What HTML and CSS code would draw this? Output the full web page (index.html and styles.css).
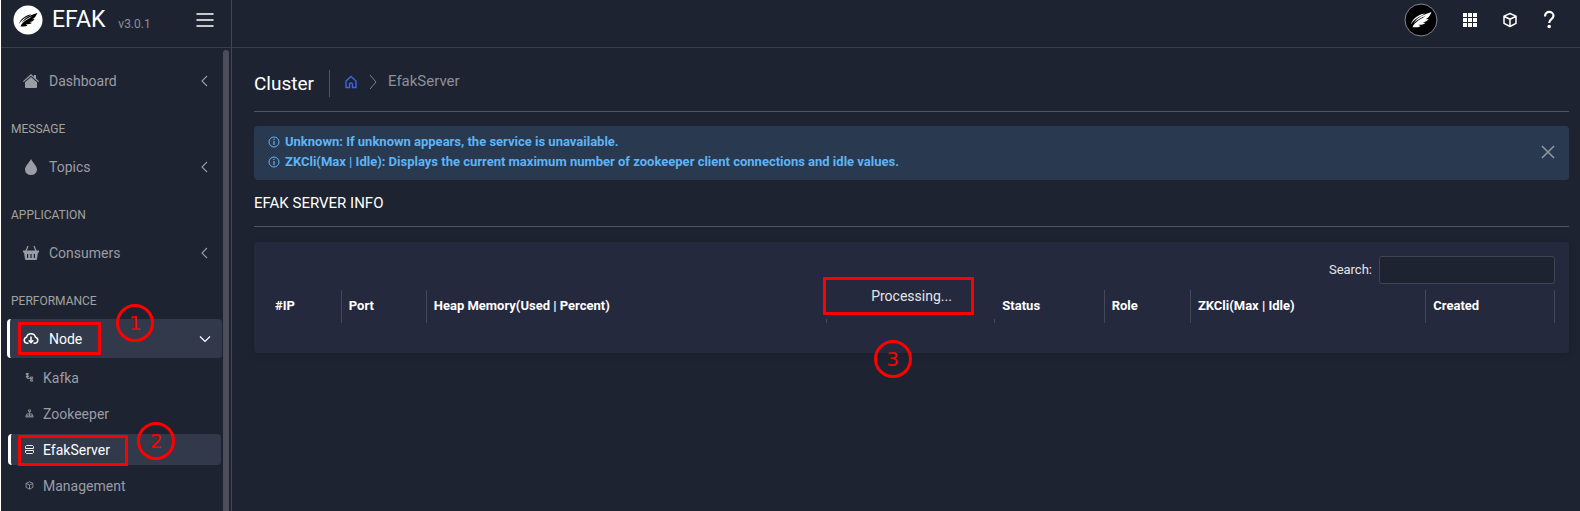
FILE: index.html
```html
<!DOCTYPE html>
<html lang="en">
<head>
<meta charset="utf-8">
<title>EFAK - EfakServer</title>
<link rel="stylesheet" href="styles.css">
</head>
<body>
<svg class="defs" aria-hidden="true">
  <symbol id="feather" viewBox="0 0 22 18">
    <path d="M21.500 1C20 5 18 7 15.500 8.200L18.500 8C17 10.300 15 11 12.500 11.500L15.500 12C13 14 10.500 13.800 8.500 13.800L10.500 15.200C8 16.500 5 16.500 2.500 16.200C5 10 12 8 16 4.500C11 7 6 9 3.500 13C6 6.500 14 3.500 21.500 1Z" fill="currentColor"/>
    <path d="M15 2.500C8 3.500 2.500 8 .8 13.500C3.500 9 7 6.500 11.500 4.700Z" fill="currentColor"/>
  </symbol>
  <symbol id="chev-left" viewBox="0 0 12 12"><path d="M8 1L3 6l5 5" fill="none" stroke="currentColor" stroke-width="1.100"/></symbol>
  <symbol id="cube" viewBox="0 0 16 16"><path d="M8 1.500l6 2.600v7.200L8 14.500l-6-3.200V4.100zM2 4.300l6 2.900 6-2.900M8 7.200v7.100" fill="none" stroke="currentColor" stroke-width="1.500" stroke-linejoin="round"/></symbol>
  <symbol id="info" viewBox="0 0 12 12"><circle cx="6" cy="6" r="5" fill="none" stroke="currentColor"/><path d="M6 5v4M6 2.800v1.200" stroke="currentColor" stroke-width="1.200"/></symbol>
</svg>
<div class="app">
  <aside class="sidebar">
    <div class="brand">
      <svg class="logo" viewBox="0 0 30 30"><circle cx="15" cy="15" r="14.500" fill="#fff"/><use href="#feather" x="5" y="7" width="20" height="16" color="#000"/></svg>
      <span class="brand-name">EFAK</span>
      <span class="version">v3.0.1</span>
      <button class="icon-btn toggle" aria-label="Toggle menu"><svg width="18" height="16" viewBox="0 0 18 16"><path d="M1 2h16M1 8h16M1 14h16" stroke="#fff" stroke-width="1.500" stroke-linecap="round"/></svg></button>
    </div>
    <div class="side-body">
      <nav class="menu">
        <a class="item" href="#"><svg class="ico" viewBox="0 0 16 16"><path d="M0 8.200L8 1l3 2.700V2h2v3.500l3 2.700-.8.800L8 2.800.8 9zM2 9.200L8 4l6 5.200V14a1 1 0 0 1-1 1H3a1 1 0 0 1-1-1z" fill="currentColor"/></svg><span>Dashboard</span><svg class="chev"><use href="#chev-left"/></svg></a>
        <div class="label">MESSAGE</div>
        <a class="item" href="#"><svg class="ico" viewBox="0 0 16 16"><path d="M8 0C6 4 2 7 2 10.500a6 5.500 0 0 0 12 0C14 7 10 4 8 0z" fill="currentColor"/></svg><span>Topics</span><svg class="chev"><use href="#chev-left"/></svg></a>
        <div class="label">APPLICATION</div>
        <a class="item" href="#"><svg class="ico" viewBox="0 0 16 16"><path d="M5 1L3 6M11 1l2 5" stroke="currentColor" stroke-width="1.200"/><path fill-rule="evenodd" d="M0 5.500h16v2h-1L14 14q-.2 1-1 1H3q-.8 0-1-1L1 7.500H0zM4 9v4h1.200V9zM7.400 9v4h1.200V9zM10.800 9v4H12V9z" fill="currentColor"/></svg><span>Consumers</span><svg class="chev"><use href="#chev-left"/></svg></a>
        <div class="label">PERFORMANCE</div>
        <div class="spot">
          <a class="item active" href="#"><svg class="ico" viewBox="0 0 16 16"><path d="M5.500 12.200H4A3 3 0 0 1 3.500 6.300 4.600 4.600 0 0 1 12.500 6.300 3 3 0 0 1 12 12.200H10.500M8 5.500v6M5.700 9.200L8 11.700l2.300-2.500" fill="none" stroke="currentColor" stroke-width="1.500"/></svg><span>Node</span><svg class="chev" viewBox="0 0 12 12"><path d="M1 3.500l5 5 5-5" fill="none" stroke="currentColor" stroke-width="1.200"/></svg></a>
          <span class="frame frame-node"></span><span class="mark mark-node">1</span>
        </div>
        <div class="submenu">
          <a class="sub" href="#"><svg class="sico" viewBox="0 0 10 10"><path d="M2.500 1v5h5M2.500 3.500h2" fill="none" stroke="currentColor"/><path d="M1 0h3v2H1zM1 3h3v2H1z" fill="currentColor"/><path d="M6 4.500h2.500v1.500H6zM6 7.500h2.500v1.500H6z" fill="none" stroke="currentColor"/></svg><span>Kafka</span></a>
          <a class="sub" href="#"><svg class="sico" viewBox="0 0 10 10"><path d="M3.800 1h2.400v2H3.800zM5 3v5M2 8V5.500h6V8M1 7.500h2V9H1zM4 7.500h2V9H4zM7 7.500h2V9H7z" fill="none" stroke="currentColor" stroke-width=".9"/></svg><span>Zookeeper</span></a>
          <div class="spot">
            <a class="sub active" href="#"><svg class="sico" viewBox="0 0 9 9"><path d="M1.500 .5h6l1 1v2h-8v-2zM.5 5.500h8v2l-1 1h-6l-1-1zM1 3.500h7" fill="none" stroke="currentColor" stroke-width=".9"/></svg><span>EfakServer</span></a>
            <span class="frame frame-server"></span><span class="mark mark-server">2</span>
          </div>
          <a class="sub" href="#"><svg class="sico"><use href="#cube"/></svg><span>Management</span></a>
        </div>
      </nav>
      <div class="scroll"></div>
    </div>
  </aside>
  <div class="page">
    <header class="topbar">
      <svg class="avatar" viewBox="0 0 34 34"><circle cx="17" cy="17" r="16" fill="#000" stroke="#858993"/><use href="#feather" x="6" y="8" width="22" height="18" color="#fff"/></svg>
      <button class="icon-btn" aria-label="Apps"><svg width="16" height="16" viewBox="0 0 16 16" fill="#fff"><path d="M1 1h4v4H1zM6 1h4v4H6zM11 1h4v4h-4zM1 6h4v4H1zM6 6h4v4H6zM11 6h4v4h-4zM1 11h4v4H1zM6 11h4v4H6zM11 11h4v4h-4z"/></svg></button>
      <button class="icon-btn" aria-label="Packages"><svg width="16" height="16"><use href="#cube"/></svg></button>
      <button class="icon-btn" aria-label="Help"><svg width="14" height="20" viewBox="0 0 14 20"><path d="M3 6.500C3 0 11.500 1 11.500 5.800 11.500 9.500 7.200 9 7.200 13" fill="none" stroke="#fff" stroke-width="2.200"/><circle cx="7.200" cy="16.500" r="1.800" fill="#fff"/></svg></button>
    </header>
    <main class="content">
      <div class="crumbs">
        <h1 class="title">Cluster</h1>
        <nav class="trail">
          <a class="home" href="#" aria-label="Home"><svg width="14" height="14" viewBox="0 0 14 14"><path d="M2 6v6.500h3.500V9.500a1.500 1.500 0 0 1 3 0v3H12V6L7 1.500z" fill="none" stroke="currentColor" stroke-width="1.400"/></svg></a>
          <svg width="10" height="16" viewBox="0 0 10 16"><path d="M2 1l6 7-6 7" fill="none" stroke="#7d818c"/></svg>
          <span>EfakServer</span>
        </nav>
      </div>
      <div class="alert">
        <div>
          <p><svg width="12" height="12"><use href="#info"/></svg>Unknown: If unknown appears, the service is unavailable.</p>
          <p><svg width="12" height="12"><use href="#info"/></svg>ZKCli(Max | Idle): Displays the current maximum number of zookeeper client connections and idle values.</p>
        </div>
        <button class="icon-btn" aria-label="Close"><svg width="14" height="14" viewBox="0 0 14 14"><path d="M1 1l12 12M13 1L1 13" stroke="#919ba8" stroke-width="1.500"/></svg></button>
      </div>
      <h2 class="section">EFAK SERVER INFO</h2>
      <section class="card">
        <div class="search"><label for="q">Search:</label><input id="q" type="search"></div>
        <table class="grid">
          <colgroup><col class="c-ip"><col class="c-port"><col class="c-heap"><col class="c-load"><col class="c-status"><col class="c-role"><col class="c-zk"><col></colgroup>
          <thead><tr><th>#IP</th><th>Port</th><th>Heap Memory(Used | Percent)</th><th></th><th>Status</th><th>Role</th><th>ZKCli(Max | Idle)</th><th>Created</th></tr></thead>
        </table>
        <div class="processing" role="status">Processing...<span class="frame frame-processing"></span><span class="mark mark-processing">3</span></div>
      </section>
    </main>
  </div>
</div>
</body>
</html>
```
FILE: styles.css
```css
* { box-sizing: border-box; }
body {
  margin: 0;
  border-left: 1px solid #fff;
  background: #1e2331;
  color: #e4e5e6;
  font: 14px/20px Roboto, sans-serif;
}
h1, h2, p { margin: 0; font-weight: inherit; }
a { color: inherit; text-decoration: none; }
svg { display: block; flex: none; }
.defs { position: absolute; width: 0; height: 0; }
.icon-btn {
  display: flex;
  padding: 0;
  border: 0;
  background: none;
  color: #fff;
}

.app { display: grid; grid-template-columns: 231px 1fr; min-height: 100vh; }

/* Sidebar */
.sidebar { display: flex; flex-direction: column; border-right: 1px solid #434754; }
.brand {
  display: flex;
  align-items: center;
  height: 48px;
  padding: 0 17px 7px 12px;
  border-bottom: 1px solid #393e4b;
}
.logo { width: 30px; height: 30px; }
.brand-name { margin-left: 9px; color: #fff; font-size: 23px; }
.version { margin: 8px 0 0 13px; color: #8c9098; font-size: 12px; }
.toggle { margin-left: auto; }
.side-body { display: flex; flex: 1; padding-top: 2px; }
.menu { flex: 1; padding: 11px 1px 0 6px; }
.scroll { width: 6px; margin-right: 2px; border-radius: 4px 4px 0 0; background: #4b4e5a; }
.item {
  display: flex;
  align-items: center;
  height: 39px;
  padding: 0 11px 0 13px;
  border-left: 3px solid transparent;
  border-radius: 4px;
  color: #9a9da5;
  font-size: 14px;
}
.ico { width: 16px; height: 16px; margin-right: 10px; }
.chev { width: 12px; height: 12px; margin-left: auto; }
.active { border-left-color: #fff; background: #32394b; color: #fff; }
.label { height: 47px; padding: 19px 0 0 4px; color: #a2a39f; font-size: 12px; line-height: 20px; }
.submenu { display: grid; gap: 5px; padding: 4px 1px 0 1px; }
.sub {
  display: flex;
  align-items: center;
  height: 31px;
  padding-left: 14px;
  border-left: 3px solid transparent;
  border-radius: 4px;
  color: #9a9da5;
  font-size: 14px;
}
.sub.active { border-left-color: #fff; color: #fff; }
.sico { width: 9px; height: 9px; margin-right: 9px; }

/* Numbered callouts */
.spot { position: relative; }
.frame { position: absolute; border: 3px solid #f00; }
.mark {
  position: absolute;
  width: 38px;
  height: 38px;
  border: 3px solid #f00;
  border-radius: 50%;
  color: #f00;
  font: 20px/32px "DejaVu Sans", sans-serif;
  text-align: center;
}
.frame-node { left: 11px; top: 3px; width: 83px; height: 33px; }
.mark-node { left: 109px; top: -15px; }
.frame-server { left: 10px; top: 1px; width: 110px; height: 31px; }
.mark-server { left: 129px; top: -12px; }
.frame-processing { left: 1px; top: -2px; width: 151px; height: 38px; }
.mark-processing { left: 52px; top: 61px; }

/* Page */
.topbar {
  display: flex;
  align-items: center;
  justify-content: flex-end;
  gap: 24px;
  height: 48px;
  padding: 0 24px 8px;
  border-bottom: 1px solid #393e4b;
}
.avatar { width: 34px; height: 34px; }
.content { padding: 22px 11px 0 22px; }
.crumbs {
  display: flex;
  align-items: center;
  height: 42px;
  padding-bottom: 14px;
  border-bottom: 1px solid #51545f;
}
.title { padding-right: 15px; border-right: 1px solid #51545f; color: #fff; font-size: 19px; line-height: 27px; }
.trail { display: flex; align-items: center; gap: 10px; margin-left: 14px; padding-bottom: 5px; color: #8c9098; font-size: 15px; }
.trail svg { margin-top: 2px; }
.home { color: #3b64e8; }
.alert {
  display: flex;
  align-items: center;
  justify-content: space-between;
  margin-top: 14px;
  padding: 6px 14px 8px;
  border-radius: 4px;
  background: #29394f;
  color: #5fb4f5;
  font-size: 13px;
  font-weight: 700;
}
.alert p { display: flex; align-items: center; gap: 5px; }
.section { padding: 13px 0; border-bottom: 1px solid #51545f; color: #fff; font-size: 15px; font-weight: 400; line-height: 20px; }
.title { font-weight: 400; }
.card {
  position: relative;
  margin-top: 15px;
  padding: 14px 14px 30px;
  border-radius: 4px;
  background: #25293e;
  box-shadow: 0 2px 6px rgba(22, 26, 36, .4);
}
.search { display: flex; align-items: center; justify-content: flex-end; gap: 7px; font-size: 13px; }
.search input {
  width: 176px;
  height: 28px;
  padding: 0 8px;
  border: 1px solid #414553;
  border-radius: 3px;
  background: #1e2331;
  color: #fff;
  font: inherit;
}
.grid { width: 100%; margin-top: 6px; border-collapse: collapse; table-layout: fixed; }
.grid th {
  height: 33px;
  padding: 0 0 2px 7px;
  border-right: 1px solid #444858;
  color: #fff;
  text-align: left;
  font-size: 13px;
  font-weight: 700;
}
.c-ip { width: 5.7%; }
.c-port { width: 6.6%; }
.c-heap { width: 31.1%; }
.c-load { width: 13.1%; }
.c-status { width: 8.5%; }
.c-role { width: 6.7%; }
.c-zk { width: 18.3%; }
.processing {
  position: absolute;
  left: 50%;
  top: 37px;
  width: 180px;
  margin-left: -90px;
  padding: 7px 0 13px;
  background: #25293e;
  font-size: 14px;
  text-align: center;
}
```
